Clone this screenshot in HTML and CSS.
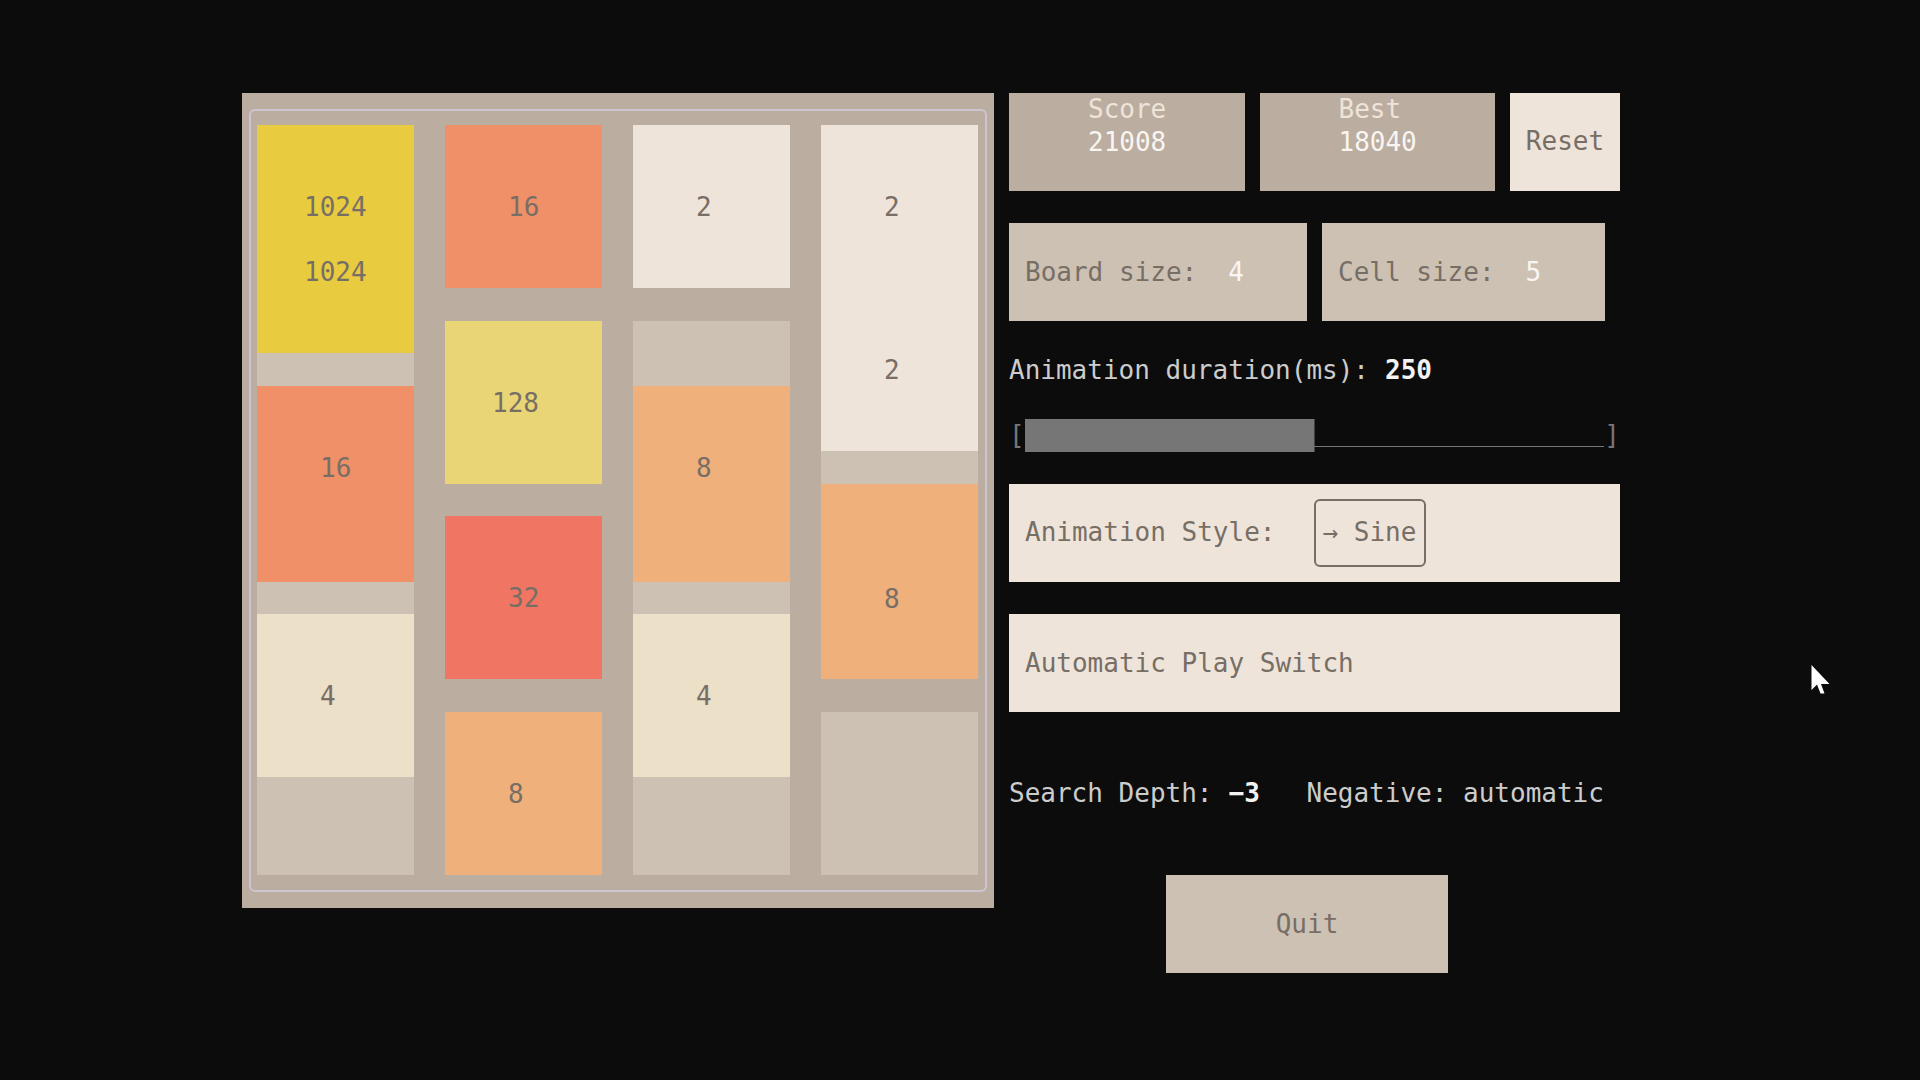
FILE: index.html
```html
<!DOCTYPE html>
<html lang="en">
<head>
<meta charset="utf-8">
<title>2048</title>
<link rel="stylesheet" href="styles.css">
</head>
<body>
<main class="game">
  <section class="board" aria-label="Board">
    <div class="frame">
      <div class="cell c1 r1"></div><div class="cell c2 r1"></div><div class="cell c3 r1"></div><div class="cell c4 r1"></div>
      <div class="cell c1 r7"></div><div class="cell c2 r7"></div><div class="cell c3 r7"></div><div class="cell c4 r7"></div>
      <div class="cell c1 r13"></div><div class="cell c2 r13"></div><div class="cell c3 r13"></div><div class="cell c4 r13"></div>
      <div class="cell c1 r19"></div><div class="cell c2 r19"></div><div class="cell c3 r19"></div><div class="cell c4 r19"></div>

      <div class="cell tile wide merging v1024 c1 r1"><span>1024</span><span>1024</span></div>
      <div class="cell tile moving v16 c1 r9">16</div>
      <div class="cell tile v4 c1 r16">4</div>

      <div class="cell tile v16 c2 r1">16</div>
      <div class="cell tile wide v128 c2 r7">128</div>
      <div class="cell tile v32 c2 r13">32</div>
      <div class="cell tile v8 c2 r19">8</div>

      <div class="cell tile v2 c3 r1">2</div>
      <div class="cell tile moving v8 c3 r9">8</div>
      <div class="cell tile v4 c3 r16">4</div>

      <div class="cell tile v2 c4 r1">2</div>
      <div class="cell tile v2 c4 r6">2</div>
      <div class="cell tile moving falling v8 c4 r12">8</div>
    </div>
  </section>

  <section class="panel" aria-label="Controls">
    <div class="row scores">
      <div class="score"><span class="score-name">Score</span><strong>21008</strong></div>
      <div class="score"><span class="score-name">Best</span><strong>18040</strong></div>
      <button class="reset" type="button">Reset</button>
    </div>
    <div class="row sizes">
      <div class="size board-size"><label for="board-size">Board size:</label><input class="digit" id="board-size" type="text" value="4"></div>
      <div class="size cell-size"><label for="cell-size">Cell size:</label><input class="digit" id="cell-size" type="text" value="5"></div>
    </div>
    <div class="row duration">
      <label for="duration">Animation duration(ms):</label><output class="value" for="duration">250</output>
    </div>
    <div class="row slider"><span>[</span><input class="range" id="duration" type="range" min="0" max="500" value="250"><span>]</span></div>
    <div class="row style-row">
      <label for="style">Animation Style:</label>
      <select class="style-select" id="style"><option>→ Sine</option></select>
    </div>
    <button class="row auto" type="button">Automatic Play Switch</button>
    <div class="row depth">
      <label for="depth">Search Depth:</label><input class="value depth-input" id="depth" type="text" value="−3"><span class="hint">Negative: automatic</span>
    </div>
    <button class="row quit" type="button">Quit</button>
  </section>
</main>
<svg class="cursor" width="20" height="30" viewBox="0 0 20 30" aria-hidden="true"><path d="M0.500 0V25L6 19.500L9.500 28.500H13.500L10 19H18.500Z" fill="#fff"/></svg>
</body>
</html>
```
FILE: styles.css
```css
* {
  box-sizing: border-box;
}

body {
  margin: 0;
  min-height: 100vh;
  background: #0c0c0c;
  color: #cccccc;
  font: 26px/33px "DejaVu Sans Mono", monospace;
}

button,
input,
select {
  margin: 0;
  padding: 0;
  border: 0;
  border-radius: 0;
  background: none;
  color: inherit;
  font: inherit;
  appearance: none;
}

.game {
  display: grid;
  grid-template-columns: 752fr 611fr;
  gap: 15px;
  align-items: start;
  padding: 93px 300px 32px 242px;
}

/* Board */
.board {
  padding: 16px 7px;
  background: #bbada0;
}

.frame {
  display: grid;
  grid-template-columns: repeat(4, 1fr);
  grid-template-rows: repeat(23, minmax(0, 1fr));
  column-gap: 31px;
  height: 783px;
  padding: 14px 7px 15px 6px;
  border: 2px solid #cdc5d2;
  border-radius: 6px;
}

.cell {
  grid-row-end: span 5;
  background: #cdc1b4;
}

.tile {
  padding: 66px 0 0 63px;
  color: #776e65;
}

.wide { padding-left: 47px; }
.moving { grid-row-end: span 6; }
.falling { padding-top: 99px; }

.merging {
  display: flex;
  flex-direction: column;
  grid-row-end: span 7;
  gap: 32px;
}

.c1 { grid-column: 1; }
.c2 { grid-column: 2; }
.c3 { grid-column: 3; }
.c4 { grid-column: 4; }

.r1 { grid-row-start: 1; }
.r6 { grid-row-start: 6; }
.r7 { grid-row-start: 7; }
.r9 { grid-row-start: 9; }
.r12 { grid-row-start: 12; }
.r13 { grid-row-start: 13; }
.r16 { grid-row-start: 16; }
.r19 { grid-row-start: 19; }

.v2 { background: #eee4da; }
.v4 { background: #ede0c8; }
.v8 { background: #efb07b; }
.v16 { background: #f09068; }
.v32 { background: #f07562; }
.v128 { background: #ead576; }
.v1024 { background: #e8cb3f; }

/* Controls */
.panel {
  display: grid;
  grid-template-rows: repeat(27, minmax(0, 1fr));
  height: 880px;
}

.row {
  display: flex;
  align-items: center;
}

.scores {
  grid-row: 1 / span 3;
  align-items: stretch;
  gap: 15px;
}

.score {
  display: flex;
  flex: 1;
  flex-direction: column;
  padding-left: 79px;
  background: #bbada0;
  color: #eee4da;
}

.score strong,
.digit {
  color: #f9f6f2;
  font-weight: 400;
}

.reset {
  width: 110px;
  background: #eee4da;
  color: #776e65;
}

.sizes {
  grid-row: 5 / span 3;
  align-items: stretch;
  gap: 15px;
}

.size {
  display: flex;
  align-items: center;
  gap: 31px;
  padding-left: 16px;
  background: #cdc1b4;
  color: #776e65;
}

.board-size { width: 298px; }
.cell-size { width: 283px; }
.digit { width: 16px; }

.duration {
  grid-row: 9;
  gap: 16px;
}

.value {
  color: #f2f2f2;
  font-weight: 700;
}

.slider {
  grid-row: 11;
  color: #767676;
}

.range {
  flex: 1;
  min-width: 0;
  height: 33px;
  background:
    linear-gradient(#767676, #767676) 0 0 / 50% 100% no-repeat,
    linear-gradient(#767676, #767676) 0 27px / 100% 1px no-repeat;
}

.range::-webkit-slider-thumb {
  width: 1px;
  height: 33px;
  appearance: none;
}

.style-row {
  grid-row: 13 / span 3;
  gap: 39px;
  padding-left: 16px;
  background: #eee4da;
  color: #776e65;
}

.style-select {
  width: 112px;
  height: 68px;
  padding-left: 6px;
  border: 2px solid #776e65;
  border-radius: 6px;
}

.auto {
  grid-row: 17 / span 3;
  padding-left: 16px;
  background: #eee4da;
  color: #776e65;
}

.depth {
  grid-row: 22;
  gap: 16px;
}

.depth-input { width: 32px; }
.hint { margin-left: 30px; }

.quit {
  grid-row: 25 / span 3;
  justify-self: center;
  justify-content: center;
  width: 282px;
  margin-right: 15px;
  background: #cdc1b4;
  color: #776e65;
}

.cursor {
  position: absolute;
  top: 665px;
  left: 1811px;
}
```
